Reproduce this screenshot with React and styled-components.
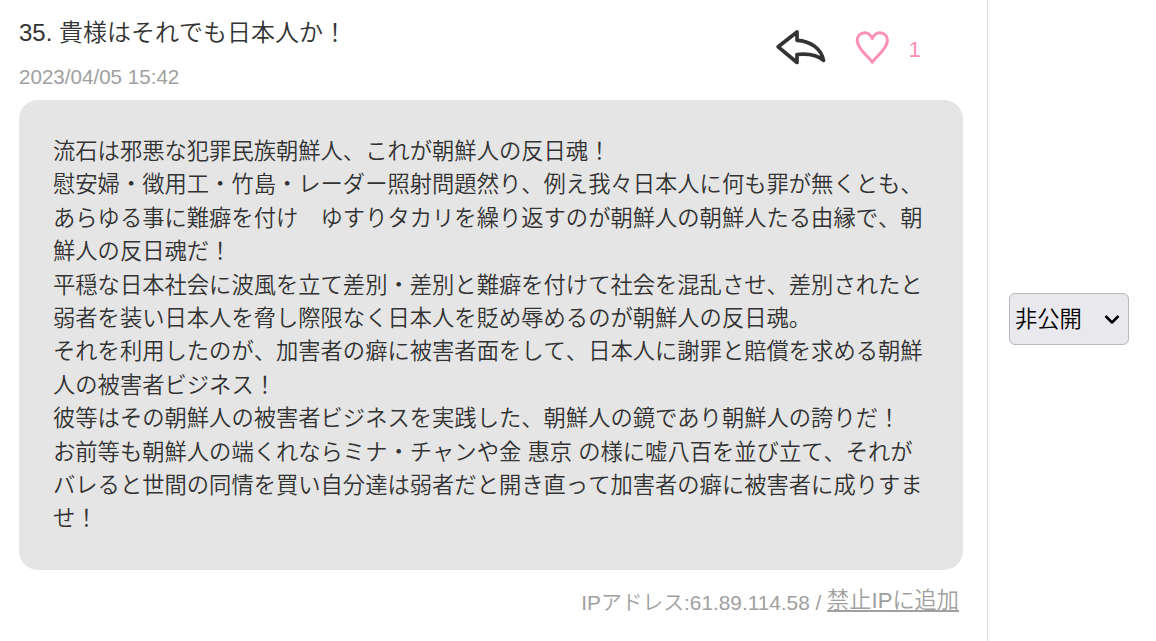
import styled, { createGlobalStyle } from "styled-components";

const GlobalStyle = createGlobalStyle`
  body {
    margin: 0;
    background: #fff;
    color: #333;
    font-family: "Liberation Sans", "Noto Sans CJK JP", sans-serif;
    font-weight: 350;
    font-kerning: none;
    text-spacing-trim: space-all;
    overflow: hidden;
  }
`;

const Row = styled.div`
  display: flex;
  height: 641px;
`;

const Comment = styled.div`
  box-sizing: border-box;
  width: 988px;
  padding: 15px 24px 0 19px;
  border-right: 1px solid #ddd;
`;

const Header = styled.div`
  display: flex;
  justify-content: space-between;
  height: 85px;
`;

const Title = styled.div`
  font-size: 24px;
  line-height: 36px;
  white-space: nowrap;
`;

const PostedAt = styled.div`
  margin-top: 10px;
  font-size: 20.6px;
  line-height: 32px;
  color: #a0a0a0;
`;

const Actions = styled.div`
  display: flex;
  align-items: flex-start;
  padding: 14px 42px 0 0;
`;

const Icon = styled.svg`
  display: block;
  fill: none;
  stroke: ${(props) => props.$color};
  stroke-width: ${(props) => props.$weight}px;
  stroke-linejoin: round;
  margin-right: ${(props) => props.$gap}px;
`;

const LikeCount = styled.span`
  font-size: 22.3px;
  line-height: 42px;
  color: #ff8fb2;
`;

const Bubble = styled.div`
  box-sizing: border-box;
  width: 944px;
  height: 470px;
  padding: 35px 34px 0;
  border-radius: 19px;
  background: #e5e5e5;
`;

const Message = styled.p`
  margin: 0;
  font-size: 22.3px;
  line-height: 33.4px;
  white-space: pre;
`;

const Footer = styled.div`
  display: flex;
  justify-content: flex-end;
  align-items: flex-start;
  padding: 14px 4px 0 0;
  line-height: 34px;
  color: #a0a0a0;
  white-space: pre;
`;

const IpAddress = styled.span`
  padding-top: 2px;
  font-size: 20.8px;
`;

const Digits = styled.span`
  font-kerning: normal;
`;

const BanLink = styled.a`
  font-size: 22.2px;
  text-decoration: underline;
  text-decoration-thickness: 2px;
  text-underline-offset: 2px;
  text-decoration-skip-ink: none;
`;

const StatusCell = styled.div`
  padding: 293px 0 0 21px;
`;

const Status = styled.button`
  box-sizing: border-box;
  display: flex;
  align-items: center;
  justify-content: space-between;
  width: 120px;
  height: 52px;
  padding: 0 8px 0 5px;
  border: 1px solid #b9b9bd;
  border-radius: 6px;
  background: #e9e9ed;
  color: #000;
  font: inherit;
  font-size: 22.3px;
`;

const StatusLabel = styled.span`
  padding-bottom: 5px;
`;

const lines = [
  "流石は邪悪な犯罪民族朝鮮人、これが朝鮮人の反日魂！",
  "慰安婦・徴用工・竹島・レーダー照射問題然り、例え我々日本人に何も罪が無くとも、",
  "あらゆる事に難癖を付け　ゆすりタカリを繰り返すのが朝鮮人の朝鮮人たる由縁で、朝",
  "鮮人の反日魂だ！",
  "平穏な日本社会に波風を立て差別・差別と難癖を付けて社会を混乱させ、差別されたと",
  "弱者を装い日本人を脅し際限なく日本人を貶め辱めるのが朝鮮人の反日魂。",
  "それを利用したのが、加害者の癖に被害者面をして、日本人に謝罪と賠償を求める朝鮮",
  "人の被害者ビジネス！",
  "彼等はその朝鮮人の被害者ビジネスを実践した、朝鮮人の鏡であり朝鮮人の誇りだ！",
  "お前等も朝鮮人の端くれならミナ・チャンや金 惠京 の様に嘘八百を並び立て、それが",
  "バレると世間の同情を買い自分達は弱者だと開き直って加害者の癖に被害者に成りすま",
  "せ！",
];

const App = () => {
  return (
    <>
      <GlobalStyle />
      <Row>
        <Comment>
          <Header>
            <div>
              <Title>35. 貴様はそれでも日本人か！</Title>
              <PostedAt>2023/04/05 15:42</PostedAt>
            </div>
            <Actions>
              <Icon width="52" height="38" viewBox="0 0 52 38" $color="#333" $weight={3.7} $gap={27}>
                <path d="M2.200 17.8 21 3v8.3C35 12 45.500 20 47.500 31.5 42 26.500 32 24.500 21 25.500v8z" />
              </Icon>
              <Icon width="36" height="38" viewBox="0 0 36 38" $color="#ff8fb2" $weight={3} $gap={18}>
                <path d="M17.300 33.200C14.800 28.500 2.200 20.500 2.200 11.500 2.200 2.500 14 1 17.300 9.500 20.600 1 32.400 2.500 32.400 11.500 32.400 20.500 19.800 28.500 17.300 33.200z" />
              </Icon>
              <LikeCount>1</LikeCount>
            </Actions>
          </Header>
          <Bubble>
            <Message>{lines.join("\n")}</Message>
          </Bubble>
          <Footer>
            <IpAddress>
              IPアドレス:<Digits>61.89.114.58</Digits>
              {" / "}
            </IpAddress>
            <BanLink>禁止IPに追加</BanLink>
          </Footer>
        </Comment>
        <StatusCell>
          <Status>
            <StatusLabel>非公開</StatusLabel>
            <Icon width="16" height="12" viewBox="0 0 16 12" $color="#000" $weight={2.5} $gap={0}>
              <path d="M1.500 3 8 9.500l6.500-6.500" />
            </Icon>
          </Status>
        </StatusCell>
      </Row>
    </>
  );
};

export default App;
